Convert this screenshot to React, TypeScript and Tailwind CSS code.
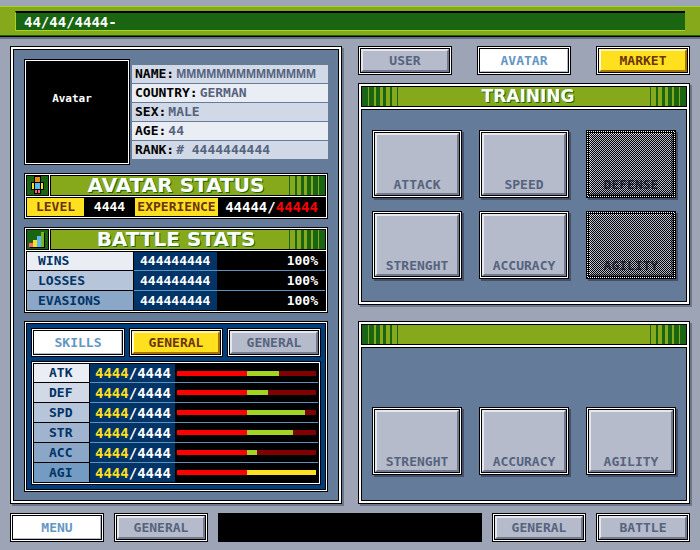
import type { ReactNode } from "react";

const MONO = "font-['DejaVu_Sans_Mono','Liberation_Mono',monospace]";
const WIDE = "font-['DejaVu_Sans','Liberation_Sans',sans-serif]";

type Tone = "idle" | "active" | "hot";

const toneClass: Record<Tone, string> = {
  idle: "bg-[#b5bbca] text-[#56637f] border-t-[#e4e8ee] border-l-[#e4e8ee] border-r-[#737a8f] border-b-[#737a8f] border-2",
  active: "bg-white text-[#6496c2] border-t-white border-l-white border-r-[#b5bbca] border-b-[#b5bbca] border",
  hot: "bg-[#ffe01f] text-[#6b3410] border-t-[#fff3a0] border-l-[#fffbe0] border-r-[#a87400] border-b-[#a87400] border-2",
};

function PixelButton({ label, tone = "idle" }: { label: string; tone?: Tone }) {
  return (
    <button type="button" className="h-[29px] w-[94px] min-w-0 border border-black bg-white p-px">
      <span className="flex h-full border border-black">
        <span className={`flex flex-1 items-center justify-center leading-4 ${toneClass[tone]}`}>{label}</span>
      </span>
    </button>
  );
}

function Tile({ label, locked = false }: { label: string; locked?: boolean }) {
  return (
    <button
      type="button"
      disabled={locked}
      className="relative h-[68px] border border-black bg-white p-px shadow-[2px_2px_0_#444f69]"
    >
      <span className="flex h-full border border-black">
        <span className={`flex flex-1 items-end justify-center leading-4 ${toneClass.idle}`}>
          <span className={locked ? "text-[#3a4562]" : ""}>{label}</span>
        </span>
      </span>
      {locked && (
        <span className="absolute -inset-px bg-[repeating-conic-gradient(#000_0_25%,transparent_0_50%)] bg-size-[2px_2px]" />
      )}
    </button>
  );
}

function Stripes({ flip = false }: { flip?: boolean }) {
  return (
    <span className={`flex w-9 shrink-0 self-stretch ${flip ? "flex-row-reverse" : ""}`} aria-hidden="true">
      <i className="w-1.5 bg-[#196512]" />
      <i className="w-px" />
      <i className="w-[5px] bg-[#196512]" />
      <i className="w-0.5" />
      <i className="w-1 bg-[#196512]" />
      <i className="w-[3px]" />
      <i className="w-[3px] bg-[#196512]" />
      <i className="w-1" />
      <i className="w-0.5 bg-[#196512]" />
      <i className="w-[5px]" />
      <i className="w-px bg-[#196512]" />
    </span>
  );
}

function Panel({ children }: { children: ReactNode }) {
  return (
    <section className="border border-black bg-white p-0.5 shadow-[2px_2px_0_#6b788c]">{children}</section>
  );
}

function TrainingPanel({ title, children }: { title?: string; children: ReactNode }) {
  return (
    <Panel>
      <div className="flex h-[21px] items-center border border-black bg-[#86a81b]">
        <Stripes />
        <h2 className={`flex-1 pl-2 text-center text-[17px] leading-[19px] text-white [text-shadow:1px_1px_0_#196512] ${WIDE}`}>
          {title}
        </h2>
        <Stripes flip />
      </div>
      <div className="mt-0.5 border border-black bg-[#657b9a] px-2.5">{children}</div>
    </Panel>
  );
}

function TitledBox({ title, icon, children }: { title: string; icon: ReactNode; children: ReactNode }) {
  return (
    <section className="border border-black bg-white p-px">
      <div className="flex gap-px">
        <span className="h-[21px] w-[23px] border border-black bg-[#196512]">{icon}</span>
        <div className="flex h-[21px] flex-1 items-center border border-black bg-[#86a81b]">
          <h2 className={`flex-1 pl-3 text-center text-[20px] leading-[19px] whitespace-nowrap text-white [text-shadow:1px_1px_0_#196512] ${WIDE}`}>
            {title}
          </h2>
          <Stripes flip />
        </div>
      </div>
      <div className="mt-px border border-black bg-black">{children}</div>
    </section>
  );
}

function AvatarIcon() {
  return (
    <svg width="21" height="19" viewBox="0 0 21 19" shapeRendering="crispEdges" aria-hidden="true">
      <path fill="#000" d="M7 0h7v6h3v8h-3v4H7v-4H4V6h3z" />
      <path fill="#f08c1e" d="M8 1h5v5H8z" />
      <path fill="#ffe01f" d="M5 7h2v6H5zM14 7h2v6h-2z" />
      <path fill="#5ab8ff" d="M8 7h5v6H8z" />
      <path fill="#ff6674" d="M8 14h2v3H8zM11 14h2v3h-2z" />
    </svg>
  );
}

function ChartIcon() {
  return (
    <svg width="21" height="19" viewBox="0 0 21 19" shapeRendering="crispEdges" aria-hidden="true">
      <path fill="#000" d="M17 3h1v15H3v-1h14z" />
      <path fill="#ff6674" d="M2 13h4v4H2z" />
      <path fill="#ffe01f" d="M6 10h4v7H6z" />
      <path fill="#5ab8ff" d="M10 6h4v11h-4z" />
      <path fill="#7fb51c" d="M14 2h3v15h-3z" />
    </svg>
  );
}

const profile = [
  { label: "NAME:", value: "MMMMMMMMMMMMMM", wide: true },
  { label: "COUNTRY:", value: "GERMAN" },
  { label: "SEX:", value: "MALE" },
  { label: "AGE:", value: "44" },
  { label: "RANK:", value: "# 4444444444" },
];

const battle = [
  { label: "WINS", bg: "bg-[#eaeef4]" },
  { label: "LOSSES", bg: "bg-[#b6c5da]" },
  { label: "EVASIONS", bg: "bg-[#8aa7c8]" },
];

const skills = [
  { label: "ATK", bg: "bg-[#eaeef4]", gain: 32 },
  { label: "DEF", bg: "bg-[#d1d9e6]", gain: 21 },
  { label: "SPD", bg: "bg-[#b6c5da]", gain: 58 },
  { label: "STR", bg: "bg-[#a0b4cf]", gain: 46 },
  { label: "ACC", bg: "bg-[#8aa7c8]", gain: 10 },
  { label: "AGI", bg: "bg-[#749bc1]", gain: 69 },
];

const BAR_TOTAL = 139;
const BAR_BASE = 70;

function rowClass(index: number, count: number) {
  return index === 0 || index === count - 1 ? "h-[19px]" : "h-5";
}

export default function App() {
  return (
    <div className={`min-h-screen bg-[#9ca4b5] pt-1.5 text-[13px] font-bold ${MONO}`}>
      <header className="border-b-2 border-[#667085]">
        <div className="border-b border-black">
          <div className="border-t border-b border-t-[#a3d421] border-b-[#196512] bg-[#86a81b] px-[15px] py-1">
            <p className="h-5 border-t-2 border-b border-l border-t-black border-b-[#a3d421] border-l-[#a3d421] bg-[#196512] pl-2 text-sm leading-[18px] text-white">
              44/44/4444-
            </p>
          </div>
        </div>
      </header>

      <main className="grid grid-cols-2 gap-4 px-2.5 pt-[7px]">
        <Panel>
          <div className="flex h-full flex-col gap-2 border border-black bg-[#657b9a] px-2.5 pt-[9px] pb-2">
            <div className="flex items-center gap-0.5">
              <div className="h-[106px] w-[106px] shrink-0 border border-black bg-white p-px">
                <div className="h-full bg-black pt-[30px] pr-2.5 text-center text-[11px] leading-4 text-white">Avatar</div>
              </div>
              <dl className="flex flex-1 flex-col gap-px">
                {profile.map((row) => (
                  <div key={row.label} className="flex h-[18px] items-center gap-0.5 pl-[3px] leading-[18px] odd:bg-[#d1d9e6] even:bg-[#eaeef4]">
                    <dt className="text-black">{row.label}</dt>
                    <dd className={`whitespace-nowrap text-[#56637f] ${row.wide ? "font-['Liberation_Sans',sans-serif] text-xs" : ""}`}>
                      {row.value}
                    </dd>
                  </div>
                ))}
              </dl>
            </div>

            <TitledBox title="AVATAR STATUS" icon={<AvatarIcon />}>
              <div className="flex h-[18px] text-center leading-[18px] text-white">
                <span className="w-[57px] bg-[#ffe01f] text-[#6b3410]">LEVEL</span>
                <span className="w-[51px]">4444</span>
                <span className="w-[83px] bg-[#ffe01f] text-[#6b3410]">EXPERIENCE</span>
                <span className="flex-1 text-sm leading-[18px]">
                  44444/<span className="text-[#ff0000]">44444</span>
                </span>
              </div>
            </TitledBox>

            <TitledBox title="BATTLE STATS" icon={<ChartIcon />}>
              <table className="w-full table-fixed border-separate border-spacing-0 leading-[18px]">
                <tbody>
                  {battle.map((row, i) => {
                    const line = i === battle.length - 1 ? "" : "border-b";
                    return (
                      <tr key={row.label} className={rowClass(i, battle.length)}>
                        <th scope="row" className={`w-[107px] border-r border-black p-0 pl-[11px] text-left text-[#003366] ${line} ${row.bg}`}>
                          {row.label}
                        </th>
                        <td className={`w-[83px] border-[#5b92c0] bg-[#003366] p-0 pl-1.5 text-white ${line}`}>444444444</td>
                        <td className={`border-[#5b92c0] p-0 pr-[7px] text-right text-white ${line}`}>100%</td>
                      </tr>
                    );
                  })}
                </tbody>
              </table>
            </TitledBox>

            <section className="border border-black bg-white p-px">
              <div className="border border-black bg-[#003d7d] px-1 py-1">
                <div className="flex justify-between">
                  <PixelButton label="SKILLS" tone="active" />
                  <PixelButton label="GENERAL" tone="hot" />
                  <PixelButton label="GENERAL" />
                </div>
                <div className="mt-1 border border-black bg-white p-px">
                  <div className="border border-black bg-black">
                    <table className="w-full table-fixed border-separate border-spacing-0 leading-[18px]">
                      <tbody>
                        {skills.map((row, i) => {
                          const line = i === skills.length - 1 ? "" : "border-b";
                          return (
                            <tr key={row.label} className={rowClass(i, skills.length)}>
                              <th scope="row" className={`w-14 border-r border-black p-0 pl-[15px] text-left text-[#003366] ${line} ${row.bg}`}>
                                {row.label}
                              </th>
                              <td className={`w-[85px] border-[#5b92c0] bg-[#003366] p-0 pl-[5px] text-sm leading-[18px] text-white ${line}`}>
                                <span className="text-[#ffe01f]">4444</span>/4444
                              </td>
                              <td className={`border-[#5b92c0] p-0 px-0.5 ${line}`}>
                                <div className="flex h-[5px] bg-[#800000]">
                                  <div className="bg-[#ff0000]" style={{ width: `${(BAR_BASE / BAR_TOTAL) * 100}%` }} />
                                  <div
                                    className={row.label === "AGI" ? "bg-[#ffe01f]" : "bg-[#a3d421]"}
                                    style={{ width: `${(row.gain / BAR_TOTAL) * 100}%` }}
                                  />
                                </div>
                              </td>
                            </tr>
                          );
                        })}
                      </tbody>
                    </table>
                  </div>
                </div>
              </div>
            </section>
          </div>
        </Panel>

        <div className="flex flex-col">
          <nav className="mb-2 flex justify-between">
            <PixelButton label="USER" />
            <PixelButton label="AVATAR" tone="active" />
            <PixelButton label="MARKET" tone="hot" />
          </nav>
          <TrainingPanel title="TRAINING">
            <div className="grid grid-cols-3 gap-x-[17px] gap-y-[13px] pt-5 pb-[22px]">
              <Tile label="ATTACK" />
              <Tile label="SPEED" />
              <Tile label="DEFENSE" locked />
              <Tile label="STRENGHT" />
              <Tile label="ACCURACY" />
              <Tile label="AGILITY" locked />
            </div>
          </TrainingPanel>
          <div className="h-4" />
          <TrainingPanel>
            <div className="grid grid-cols-3 gap-x-[17px] pt-[59px] pb-[25px]">
              <Tile label="STRENGHT" />
              <Tile label="ACCURACY" />
              <Tile label="AGILITY" />
            </div>
          </TrainingPanel>
        </div>
      </main>

      <footer className="flex gap-2.5 px-2.5 pt-[9px] pb-2">
        <PixelButton label="MENU" tone="active" />
        <PixelButton label="GENERAL" />
        <div className="flex-1 bg-black" />
        <PixelButton label="GENERAL" />
        <PixelButton label="BATTLE" />
      </footer>
    </div>
  );
}
